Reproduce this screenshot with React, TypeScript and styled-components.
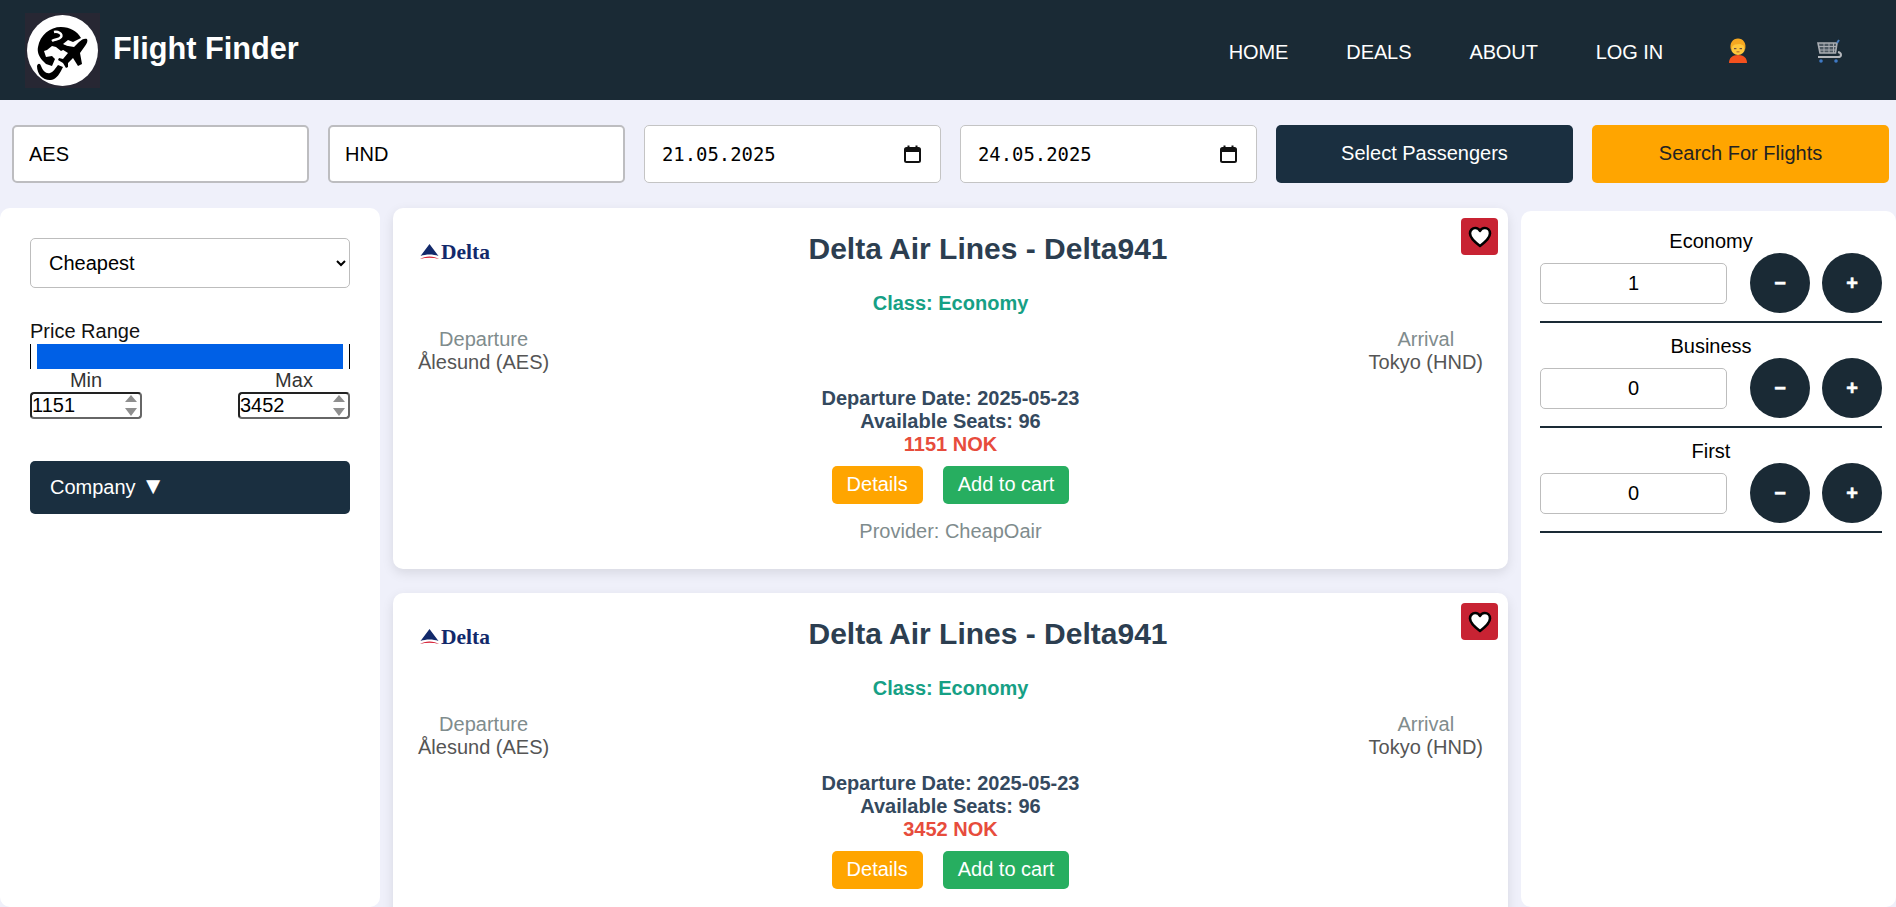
import React, { FC } from 'react';
import styled, { createGlobalStyle } from 'styled-components';

const GlobalStyle = createGlobalStyle`
  html, body {
    margin: 0;
    padding: 0;
    height: 907px;
    overflow: hidden;
    background: #eff0fa;
    font-family: "Liberation Sans", Arial, sans-serif;
  }
  * { box-sizing: border-box; }
`;

const Page = styled.div`
  width: 1896px;
  height: 907px;
  overflow: hidden;
`;

const Header = styled.header`
  height: 100px;
  background: #1a2a35;
  display: flex;
  align-items: center;
  justify-content: space-between;
  padding: 0 49px 0 25px;
`;

const Brand = styled.div`
  display: flex;
  align-items: center;
  gap: 13px;
  color: #fff;
  font-size: 30.7px;
  font-weight: bold;
`;

const BrandName = styled.span`
  margin-bottom: 2px;
`;

const LogoBox = styled.div`
  width: 75px;
  height: 75px;
  background: #272733;
`;

const Nav = styled.nav`
  display: flex;
  align-items: center;
  gap: 58px;
  margin-top: 5px;
`;

const NavLink = styled.a`
  color: #fff;
  font-size: 20px;
  display: flex;
  align-items: center;
  letter-spacing: -0.1px;
`;

const NavIcon = styled.a`
  width: 34px;
  margin-bottom: 4px;
  display: flex;
  justify-content: center;
`;

const SearchBar = styled.div`
  display: grid;
  grid-template-columns: repeat(6, 297px);
  column-gap: 19px;
  padding: 25px 0 25px 12px;
`;

const TextInput = styled.input`
  height: 58px;
  width: 100%;
  border: 2px solid #bdbdc0;
  border-radius: 5px;
  background: #fff;
  padding: 0 15px;
  font-family: inherit;
  font-size: 20px;
  color: #000;
  outline: none;
`;

const DateBox = styled.div`
  height: 58px;
  border: 1px solid #c4c4c4;
  border-radius: 5px;
  background: #fff;
  padding: 0 19px 0 17px;
  display: flex;
  align-items: center;
  justify-content: space-between;
  font-family: "DejaVu Sans Mono", monospace;
  font-size: 18.9px;
  color: #000;
`;

const BarButton = styled.button<{ $accent?: boolean }>`
  height: 58px;
  border: none;
  border-radius: 5px;
  padding: 0 0 2px;
  background: ${(p) => (p.$accent ? '#ffa500' : '#1a2f40')};
  color: ${(p) => (p.$accent ? '#222' : '#fff')};
  font-family: inherit;
  font-size: 20px;
`;

const Columns = styled.div`
  display: grid;
  grid-template-columns: 380px 1115px 1fr;
  column-gap: 13px;
  align-items: start;
`;

const LeftPanel = styled.aside`
  height: 699px;
  background: #fff;
  border-radius: 10px;
  padding: 30px;
`;

const SortSelect = styled.select`
  display: block;
  width: 320px;
  height: 50px;
  border: 1px solid #bdbdbd;
  border-radius: 5px;
  background: #fff;
  padding: 0 14px;
  font-family: inherit;
  font-size: 20px;
  color: #000;
`;

const RangeLabel = styled.div`
  margin-top: 32px;
  font-size: 20px;
  line-height: 23px;
  color: #111;
`;

const RangeTrack = styled.div`
  margin-top: 1px;
  height: 25px;
  border-left: 1px solid #000;
  border-right: 1px solid #000;
  padding: 0 6px;
`;

const RangeFill = styled.div`
  height: 100%;
  background: #0060e6;
`;

const MinMaxRow = styled.div`
  display: flex;
  justify-content: space-between;
`;

const MinMaxField = styled.div`
  width: 112px;
  text-align: center;
  font-size: 20px;
  line-height: 23px;
  color: #333;
`;

const NumberWrap = styled.div`
  position: relative;
  height: 27px;
`;

const NumberInput = styled.input`
  display: block;
  width: 100%;
  height: 27px;
  border: 2px solid #666;
  border-top-color: #222;
  border-left-color: #222;
  border-radius: 4px;
  background: #fff;
  padding: 0 1px 0 0;
  font-family: inherit;
  font-size: 20px;
  color: #000;
  outline: none;
  appearance: textfield;
  &::-webkit-inner-spin-button {
    appearance: none;
  }
`;

const SpinArrows = styled.svg`
  position: absolute;
  top: 3px;
  right: 5px;
`;

const CompanyButton = styled.button`
  display: block;
  width: 320px;
  height: 53px;
  margin-top: 42px;
  border: none;
  border-radius: 5px;
  background: #1a2f40;
  color: #fff;
  padding: 0 20px;
  text-align: left;
  font-family: inherit;
  font-size: 20px;
`;

const Caret = styled.span`
  font-size: 24px;
  line-height: 20px;
`;

const CardList = styled.main`
  display: flex;
  flex-direction: column;
  gap: 24px;
`;

const Card = styled.article`
  position: relative;
  background: #fff;
  border-radius: 10px;
  box-shadow: 0 4px 12px rgba(0, 0, 0, 0.1);
  padding: 24px 25px 25px;
  text-align: center;
`;

const HeartButton = styled.button`
  position: absolute;
  top: 10px;
  right: 10px;
  width: 37px;
  height: 37px;
  border: none;
  border-radius: 4px;
  background: #c82333;
  padding: 0;
  display: flex;
  align-items: center;
  justify-content: center;
`;

const CardHead = styled.div`
  display: flex;
  align-items: center;
  height: 34px;
`;

const DeltaLogo = styled.div`
  width: 75px;
  padding-left: 2px;
  margin-top: 5px;
  display: flex;
  align-items: center;
  gap: 2px;
  color: #12296b;
  font-family: "Liberation Serif", serif;
  font-weight: bold;
  font-size: 21.5px;
  line-height: 20px;
`;

const CardTitle = styled.h2`
  flex: 1;
  margin: 0;
  font-size: 30px;
  line-height: 34px;
  font-weight: bold;
  color: #2c3e50;
`;

const ClassLine = styled.div`
  margin-top: 26px;
  font-size: 20px;
  line-height: 23px;
  font-weight: bold;
  color: #16a085;
`;

const Route = styled.div`
  display: flex;
  justify-content: space-between;
  margin-top: 13px;
`;

const Stop = styled.div`
  font-size: 20px;
  line-height: 23px;
  color: #555;
`;

const StopLabel = styled.div`
  color: #7f8c8d;
`;

const Facts = styled.div`
  margin-top: 13px;
  font-size: 20px;
  line-height: 23px;
  font-weight: bold;
  color: #34495e;
`;

const Price = styled.div`
  color: #e74c3c;
`;

const Actions = styled.div`
  display: flex;
  justify-content: center;
  gap: 20px;
  margin-top: 10px;
`;

const ActionButton = styled.button<{ $green?: boolean }>`
  height: 38px;
  padding: 0 15px 1px;
  border: none;
  border-radius: 5px;
  background: ${(p) => (p.$green ? '#27ae60' : '#ffa500')};
  color: #fff;
  font-family: inherit;
  font-size: 20px;
`;

const Provider = styled.div`
  margin-top: 16px;
  padding-bottom: 1px;
  font-size: 20px;
  line-height: 23px;
  color: #7f8c8d;
`;

const PassengerPanel = styled.aside`
  height: 696px;
  margin-top: 3px;
  background: #fff;
  border-radius: 10px;
  padding: 19px 14px 0 19px;
`;

const ClassBlock = styled.div`
  border-bottom: 2px solid #1a2a35;
  padding-bottom: 8px;
  margin-bottom: 12px;
`;

const ClassName = styled.div`
  text-align: center;
  font-size: 20px;
  line-height: 23px;
  color: #000;
`;

const Counter = styled.div`
  display: flex;
  align-items: center;
`;

const CountInput = styled.input`
  width: 187px;
  height: 41px;
  margin-right: 23px;
  border: 1px solid #bdbdbd;
  border-radius: 5px;
  background: #fff;
  text-align: center;
  font-family: inherit;
  font-size: 20px;
  color: #000;
  outline: none;
`;

const RoundButton = styled.button`
  width: 60px;
  height: 60px;
  border: none;
  border-radius: 50%;
  background: #1a2a35;
  color: #fff;
  padding: 0;
  margin-right: 12px;
  font-family: inherit;
  font-size: 20px;
  font-weight: bold;
  -webkit-text-stroke: 0.5px #fff;
  &:last-child {
    margin-right: 0;
  }
`;

// round logo with the plane, hand drawn from the picture
const LogoMark: FC = () => (
  <svg width="75" height="75" viewBox="0 0 75 75">
    <circle cx="37.5" cy="37.5" r="35.5" fill="#fff" />
    <path
      d="M13 34C15 22 25 14 36 14C45 14 52 18 56 25L48 29L43 27L38 31L44 34L36 38L31 34L27 33L22 37L19 38L21 44L27 43L30 46L27 53L21 51L17 47C14 43 12 39 13 34Z"
      fill="#000"
    />
    <path d="M29 19C33 18 38 21 36 24C34 27 30 26 27 28" fill="none" stroke="#fff" strokeWidth="2.5" />
    <path
      d="M62 26C60 25 57 26 54 29L49 34L37 32L35 35L43 40L38 46L34 45L33 47L38 50L41 55L43 54L43 50L48 45L53 53L57 51L55 40L60 33C62 30 63 28 62 26Z"
      fill="#000"
    />
    <path
      d="M12 53C13 50 15 50 16 53C18 58 21 61 25 60C28 59 30 56 33 52L38 54C35 60 32 66 26 67C19 68 12 62 12 53Z"
      fill="#000"
    />
  </svg>
);

const PersonIcon: FC = () => (
  <svg width="18" height="25" viewBox="0 0 18 25">
    <path d="M0 25C0 20 3 17 9 17C15 17 18 20 18 25Z" fill="#f4511e" />
    <circle cx="9" cy="10" r="7" fill="#ffc83d" />
    <path d="M2 12C0 5 4 0.5 9 0.5C14 0.5 18 5 16 12L14.5 7.5L11 6L6 6.5L3.5 8Z" fill="#f6a821" />
    <rect x="5" y="10" width="2.4" height="1.2" fill="#6d4c41" />
    <rect x="10.6" y="10" width="2.4" height="1.2" fill="#6d4c41" />
    <rect x="7.5" y="13.4" width="3" height="0.9" fill="#a1552b" />
  </svg>
);

const CartIcon: FC = () => (
  <svg width="26" height="24" viewBox="0 0 26 24" fill="none">
    <path d="M1 4H20L18.5 14H3L1 4Z" fill="#4d5963" stroke="#a9adb3" strokeWidth="1.6" />
    <path d="M1.8 7.5H19.5M2.5 11H19M7 4V14M12 4V14M16.5 4V14" stroke="#a9adb3" strokeWidth="1" />
    <path d="M20 4L22 1" stroke="#4a7fc1" strokeWidth="2" />
    <path d="M1 18H21C25 18 25 14 21 13" stroke="#b4b7bc" strokeWidth="2" />
    <circle cx="4" cy="22" r="1.8" fill="#3f79c4" />
    <circle cx="19" cy="22" r="1.8" fill="#3f79c4" />
  </svg>
);

const CalendarIcon: FC = () => (
  <svg width="17" height="18" viewBox="0 0 17 18" fill="none">
    <rect x="1" y="3" width="15" height="14" rx="1.5" stroke="#111" strokeWidth="2" />
    <rect x="1" y="3" width="15" height="4" fill="#111" />
    <rect x="3.5" y="0.5" width="2" height="3" fill="#111" />
    <rect x="11.5" y="0.5" width="2" height="3" fill="#111" />
  </svg>
);

const HeartIcon: FC = () => (
  <svg width="24" height="22" viewBox="0 0 24 22">
    <path
      d="M12 20C6 15.5 2 12 2 7.5C2 4.2 4.5 2 7.2 2C9.2 2 11 3 12 5C13 3 14.8 2 16.8 2C19.5 2 22 4.2 22 7.5C22 12 18 15.5 12 20Z"
      fill="#fff"
      stroke="#000"
      strokeWidth="2.6"
      strokeLinejoin="round"
    />
  </svg>
);

const DeltaMark: FC = () => (
  <svg width="19" height="15" viewBox="0 0 19 15">
    <path d="M9.5 0L18.5 12C13 10 6 10 0.5 12Z" fill="#12296b" />
    <path d="M0 15C5 11.6 14 11.6 19 15C13 13.4 6 13.4 0 15Z" fill="#d3182f" />
  </svg>
);

const SpinGlyph: FC = () => (
  <SpinArrows width="12" height="21" viewBox="0 0 12 21">
    <path d="M6 0L12 7H0Z" fill="#8f8f8f" />
    <path d="M0 13H12L6 21Z" fill="#8f8f8f" />
  </SpinArrows>
);

interface Flight {
  price: number;
}

const flights: Flight[] = [{ price: 1151 }, { price: 3452 }];
const classes = [
  { name: 'Economy', count: 1 },
  { name: 'Business', count: 0 },
  { name: 'First', count: 0 },
];

const App: FC = () => {
  return (
    <Page>
      <GlobalStyle />
      <Header>
        <Brand>
          <LogoBox>
            <LogoMark />
          </LogoBox>
          <BrandName>Flight Finder</BrandName>
        </Brand>
        <Nav>
          <NavLink>HOME</NavLink>
          <NavLink>DEALS</NavLink>
          <NavLink>ABOUT</NavLink>
          <NavLink>LOG IN</NavLink>
          <NavIcon><PersonIcon /></NavIcon>
          <NavIcon><CartIcon /></NavIcon>
        </Nav>
      </Header>

      <SearchBar>
        <TextInput defaultValue="AES" />
        <TextInput defaultValue="HND" />
        <DateBox>21.05.2025<CalendarIcon /></DateBox>
        <DateBox>24.05.2025<CalendarIcon /></DateBox>
        <BarButton>Select Passengers</BarButton>
        <BarButton $accent>Search For Flights</BarButton>
      </SearchBar>

      <Columns>
        <LeftPanel>
          <SortSelect defaultValue="Cheapest">
            <option>Cheapest</option>
            <option>Fastest</option>
          </SortSelect>
          <RangeLabel>Price Range</RangeLabel>
          <RangeTrack>
            <RangeFill />
          </RangeTrack>
          <MinMaxRow>
            <MinMaxField>
              Min
              <NumberWrap>
                <NumberInput type="number" defaultValue={1151} />
                <SpinGlyph />
              </NumberWrap>
            </MinMaxField>
            <MinMaxField>
              Max
              <NumberWrap>
                <NumberInput type="number" defaultValue={3452} />
                <SpinGlyph />
              </NumberWrap>
            </MinMaxField>
          </MinMaxRow>
          <CompanyButton>Company <Caret>▼</Caret></CompanyButton>
        </LeftPanel>

        <CardList>
          {flights.map((f) => (
            <Card key={f.price}>
              <HeartButton><HeartIcon /></HeartButton>
              <CardHead>
                <DeltaLogo><DeltaMark />Delta</DeltaLogo>
                <CardTitle>Delta Air Lines - Delta941</CardTitle>
              </CardHead>
              <ClassLine>Class: Economy</ClassLine>
              <Route>
                <Stop>
                  <StopLabel>Departure</StopLabel>
                  Ålesund (AES)
                </Stop>
                <Stop>
                  <StopLabel>Arrival</StopLabel>
                  Tokyo (HND)
                </Stop>
              </Route>
              <Facts>
                <div>Departure Date: 2025-05-23</div>
                <div>Available Seats: 96</div>
                <Price>{f.price} NOK</Price>
              </Facts>
              <Actions>
                <ActionButton>Details</ActionButton>
                <ActionButton $green>Add to cart</ActionButton>
              </Actions>
              <Provider>Provider: CheapOair</Provider>
            </Card>
          ))}
        </CardList>

        <PassengerPanel>
          {classes.map((c) => (
            <ClassBlock key={c.name}>
              <ClassName>{c.name}</ClassName>
              <Counter>
                <CountInput defaultValue={c.count} />
                <RoundButton>−</RoundButton>
                <RoundButton>+</RoundButton>
              </Counter>
            </ClassBlock>
          ))}
        </PassengerPanel>
      </Columns>
    </Page>
  );
};

export default App;
